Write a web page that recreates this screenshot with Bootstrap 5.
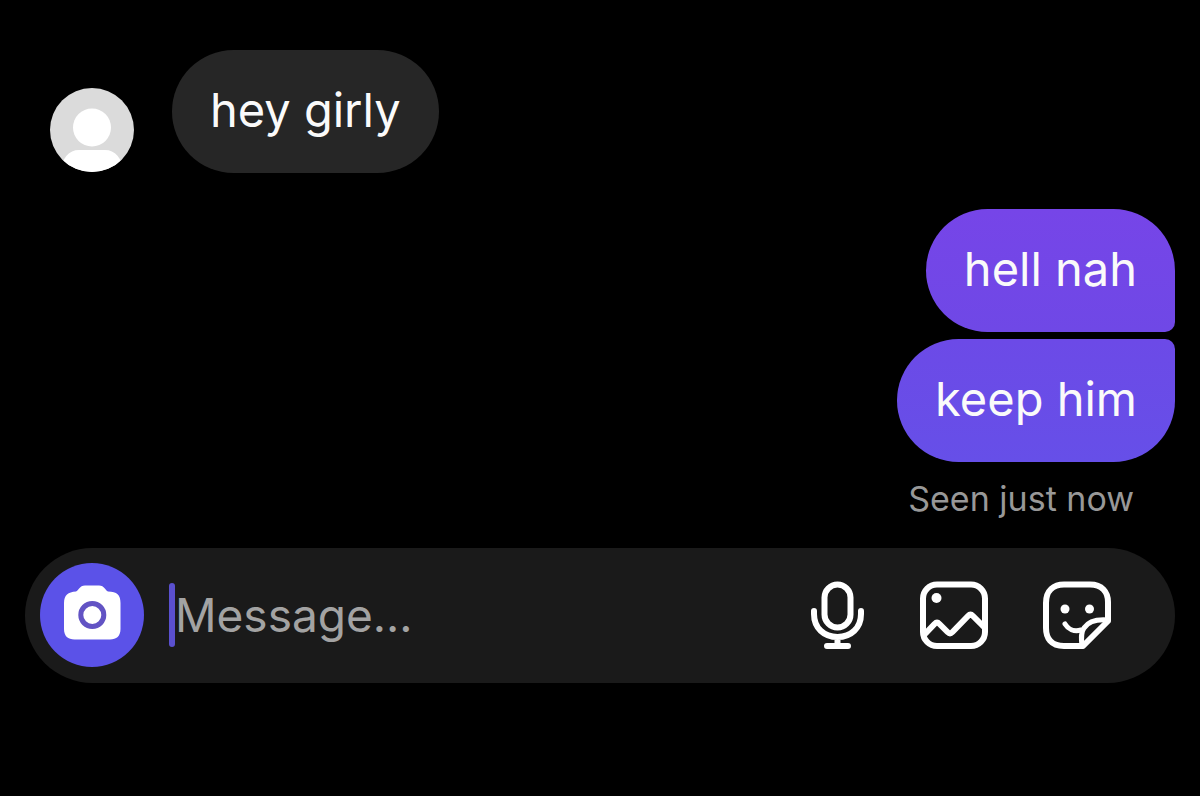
<!DOCTYPE html>
<html lang="en" data-bs-theme="dark">
<head>
<meta charset="utf-8">
<meta name="viewport" content="width=device-width, initial-scale=1">
<title>Direct message</title>
<link href="https://cdn.jsdelivr.net/npm/bootstrap@5.3.0/dist/css/bootstrap.min.css" rel="stylesheet">
<style>
  body { background: #000; font-family: Inter, "Liberation Sans", sans-serif; }
  .chat { padding: 50px 25px 0; }
  .avatar { width: 84px; height: 84px; margin: 0 38px 1px 25px; }
  .bubble { padding: 24px 38px 27px; border-radius: 62px; font-size: 47px; line-height: 72px; color: #fafafa; background: #262626; }
  .bubble-first { background: linear-gradient(#7645e8, #6f48e6); border-bottom-right-radius: 10px; }
  .bubble-last { background: linear-gradient(#6c4ae7, #664fe8); border-top-right-radius: 10px; }
  .sent { gap: 7px; margin-top: 36px; }
  .seen { margin: 15px 41px 0 0; font-size: 34px; line-height: 44px; color: #989898; }
  .composer { margin-top: 27px; padding: 15px 63px 16px 15px; border-radius: 68px; background: #1a1a1a; }
  .camera { width: 104px; height: 104px; background: #5b52e8; }
  .caret { width: 6px; height: 64px; margin-left: 25px; background: #5a50cf; }
  .message-box { min-width: 0; font-size: 46px; line-height: 64px; color: #fafafa; }
  .message-box::placeholder { color: #a3a3a3; opacity: 1; }
  .message-box:focus { outline: 0; }
  .tools { gap: 53px; }
</style>
</head>
<body>
<main class="chat">
  <div class="d-flex align-items-end">
    <svg class="avatar flex-shrink-0" viewBox="0 0 84 84" role="img" aria-label="Profile photo">
      <defs><clipPath id="face"><circle cx="42" cy="42" r="42"/></clipPath></defs>
      <g clip-path="url(#face)">
        <rect width="84" height="84" fill="#dbdbdb"/>
        <circle cx="42" cy="39.500" r="19" fill="#fff"/>
        <path d="M10 84C12 70 19 62 29 62H55C65 62 72 70 74 84Z" fill="#fff"/>
      </g>
    </svg>
    <div class="bubble">hey girly</div>
  </div>
  <div class="sent d-flex flex-column align-items-end">
    <div class="bubble bubble-first">hell nah</div>
    <div class="bubble bubble-last">keep him</div>
  </div>
  <p class="seen text-end">Seen just now</p>
  <form class="composer d-flex align-items-center">
    <button type="button" class="camera btn border-0 rounded-circle p-0 flex-shrink-0 d-flex align-items-center justify-content-center" aria-label="Camera">
      <svg width="104" height="104" viewBox="0 0 104 104">
        <path d="M36 28.500C38.500 27.500 39.500 22.500 45 22.500H59C64.500 22.500 65.500 27.500 68 28.500C77 28.500 80.500 32 80.500 40V66C80.500 73 76.500 76.500 70 76.500H34.500C28 76.500 24 73 24 66V40C24 32 28 29 36 28.500Z" fill="#fff"/>
        <circle cx="52.300" cy="52" r="11.500" fill="none" stroke="#6253c4" stroke-width="5"/>
      </svg>
    </button>
    <span class="caret rounded-pill flex-shrink-0"></span>
    <input class="message-box flex-grow-1 border-0 bg-transparent p-0" type="text" placeholder="Message..." aria-label="Message">
    <div class="tools d-flex align-items-center flex-shrink-0">
      <button type="button" class="btn border-0 p-0 d-flex" aria-label="Voice message">
        <svg width="56" height="70" viewBox="0 0 56 70" fill="none" stroke="#fff" stroke-width="6" stroke-linecap="round">
          <rect x="14.500" y="4.500" width="26" height="43" rx="13"/>
          <path d="M4 31V34C4 48 14 57 27.500 57S51 48 51 34V31M27.500 57V66M17 66H38"/>
        </svg>
      </button>
      <button type="button" class="btn border-0 p-0 d-flex" aria-label="Photo">
        <svg width="70" height="70" viewBox="0 0 70 70" fill="none" stroke="#fff" stroke-width="6" stroke-linejoin="round">
          <rect x="4" y="4.500" width="62" height="61.500" rx="14"/>
          <circle cx="17.500" cy="18" r="5" fill="#fff" stroke="none"/>
          <path d="M5 55L15.500 44Q18 41.500 20.500 44L28.500 52Q31 54.500 33.500 52L49 36Q51.500 33.500 54 36L66 48"/>
        </svg>
      </button>
      <button type="button" class="btn border-0 p-0 d-flex" aria-label="Sticker">
        <svg width="70" height="70" viewBox="0 0 70 70" fill="none" stroke="#fff" stroke-width="6" stroke-linecap="round" stroke-linejoin="round">
          <path d="M41 66H22C9 66 4 58 4 48V23C4 10 12 4.500 22 4.500H48C60 4.500 66 12 66 22V41Z"/>
          <path d="M40 66C39 57 39 52 42 48C46 42 54 39 66 40" stroke-width="5"/>
          <path d="M23 44C26 49 32 52 39 50" stroke-width="5"/>
          <g fill="#fff" stroke="none"><circle cx="23" cy="29" r="4.500"/><circle cx="47.500" cy="29" r="4.500"/></g>
        </svg>
      </button>
    </div>
  </form>
</main>
<script src="https://cdn.jsdelivr.net/npm/bootstrap@5.3.0/dist/js/bootstrap.bundle.min.js"></script>
</body>
</html>
